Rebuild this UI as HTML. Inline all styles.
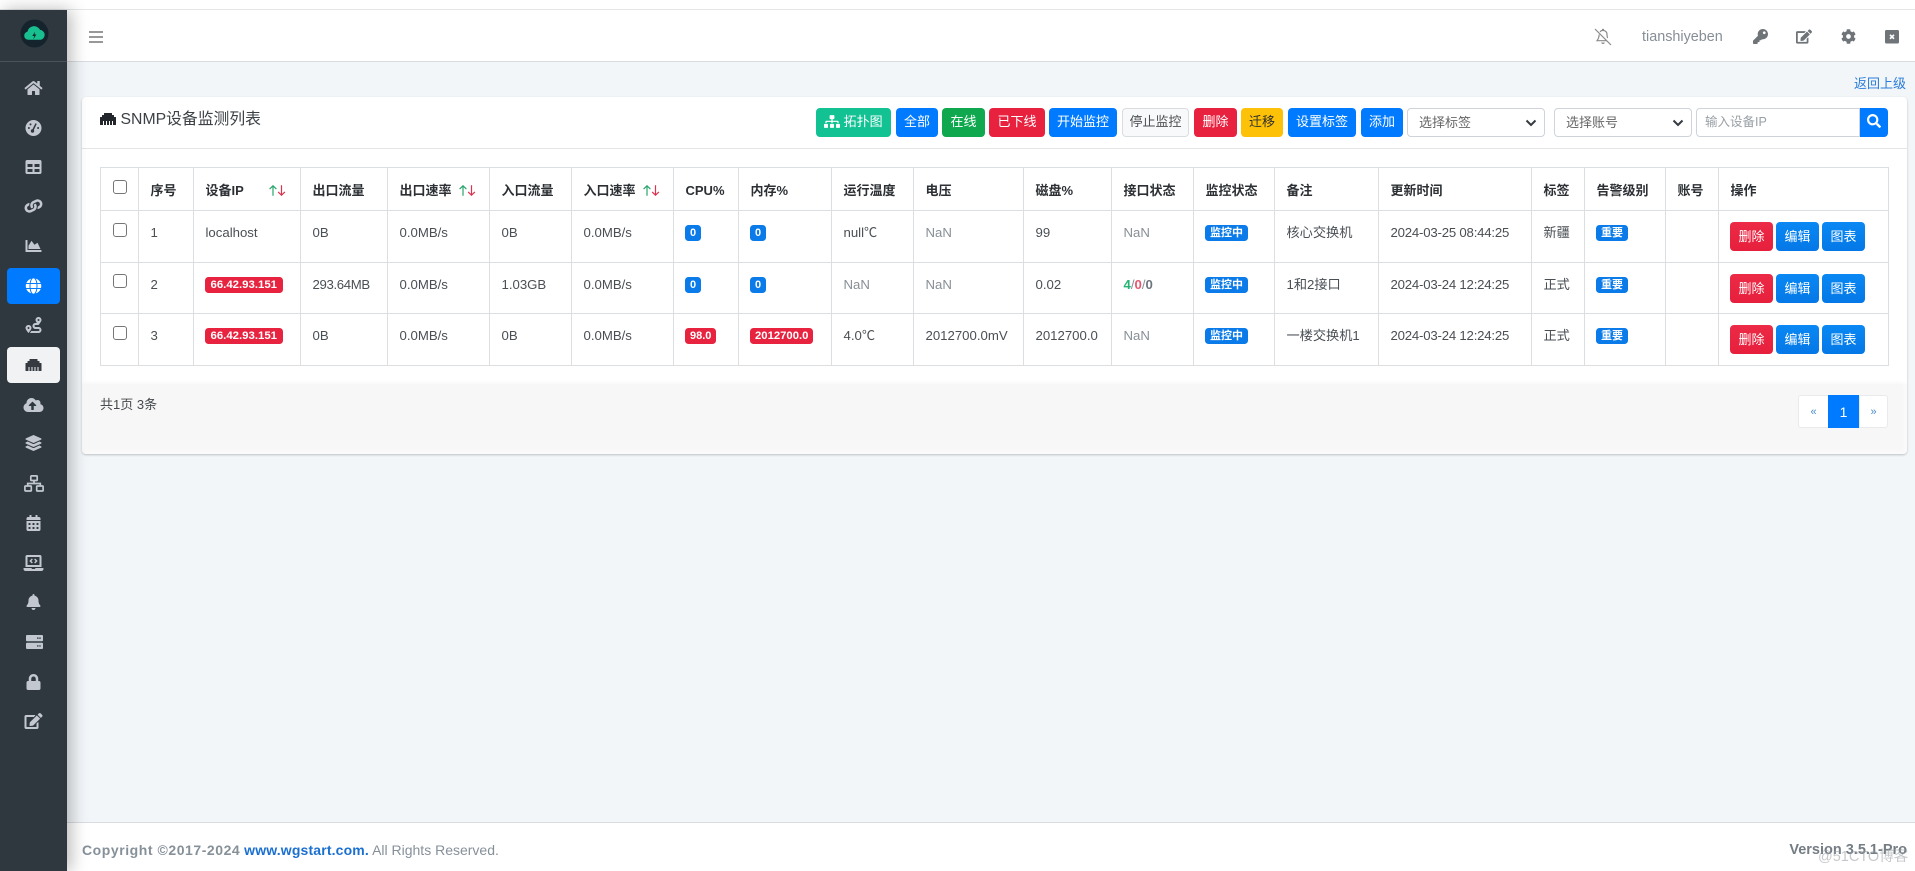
<!DOCTYPE html>
<html lang="zh">
<head>
<meta charset="utf-8">
<title>SNMP设备监测列表</title>
<style>
*{box-sizing:border-box}
html,body{margin:0;padding:0;width:1915px;height:871px;overflow:hidden;background:#f2f6f9;font-family:"Liberation Sans","Noto Sans CJK SC",sans-serif;font-size:13.2px;color:#4a4f54}
.a{position:absolute}
#top{left:0;top:0;width:1915px;height:10px;background:#fff;border-bottom:1px solid #e4e6e8}
#nav{left:67px;top:10px;width:1848px;height:52px;background:#fff;border-bottom:1px solid #d8dde1}
#side{left:0;top:10px;width:67px;height:861px;background:#30383f;box-shadow:4px 0 16px rgba(0,0,0,.28);z-index:5}
#side .ln{position:absolute;left:0;top:51px;width:67px;height:1px;background:#4b5359}
.n{position:absolute;left:0;width:67px;height:16px;fill:#c2c7d0}
.box{position:absolute;left:7px;width:53px;height:36px;border-radius:4px}
#foot{left:67px;top:822px;width:1848px;height:49px;background:#fff;border-top:1px solid #d8dde1}
#card{left:82px;top:97px;width:1825px;height:357px;background:#fff;border-radius:4px;box-shadow:0 1px 2px rgba(0,0,0,.22)}
#chead{left:82px;top:148px;width:1825px;height:1px;background:#e3e5e7}
#cfoot0{left:82px;top:381px;width:1825px;height:73px;background:linear-gradient(#fff,#fafafa 4px);border-radius:0 0 4px 4px}
#cfoot{left:87px;top:384px;width:1815px;height:65px;background:#f7f7f7;box-shadow:0 0 4px 1px #f7f7f7}
.b{position:absolute;top:108px;height:29px;line-height:28px;border-radius:4px;text-align:center;color:#fff;font-size:13px;background:#007bff;white-space:nowrap}
.sel{position:absolute;top:108px;height:29px;background:#fff;border:1px solid #ced4da;border-radius:4px;color:#666;font-size:13px;line-height:27px;padding-left:11px}
.sel svg{position:absolute;top:9px;right:7px;width:12px;height:10px}
table{position:absolute;left:100px;top:167px;width:1788px;border-collapse:collapse;table-layout:fixed;background:#fff}
th,td{border:1px solid #dcdfe2;vertical-align:top;text-align:left;padding:12px 0 0 11.5px;line-height:20px;font-weight:400;white-space:nowrap;overflow:visible}
th{font-weight:700;color:#2c3034;padding-top:13px;font-size:13px}
.cb{display:block;width:14px;height:14px;border:1px solid #767676;border-radius:3px;background:#fff;margin-top:0}
th .cb{margin-top:-1px}
.mut{color:#888f95}
.bd{display:block;width:fit-content;height:16px;line-height:16px;border-radius:3.5px;color:#fff;font-weight:700;font-size:11px;padding:0 5px;margin:2px 0 0 -.5px;background:#0a7be8}
.r{background:#e8233f}
.ip{font-size:11.4px;padding:0 5.500px}
.ops{display:flex;gap:3px;margin:-1px 0 0 -.5px}
.ops span{display:block;width:43px;height:28.5px;line-height:29px;border-radius:4px;color:#fff;font-size:13px;text-align:center;background:linear-gradient(#0a88f4,#0478e6)}
.ops span.del{background:linear-gradient(#ec2b47,#e61f3c)}
.sa{display:inline-block;vertical-align:-1px;width:17px;height:11px}
.tm{letter-spacing:-.2px}
.pg{position:absolute;top:395px;height:33px;background:#fff;text-align:center;line-height:32px;color:#4a8ccc;font-size:11px;border:1px solid #e8eaec}
</style>
</head>
<body>
<svg width="0" height="0" style="position:absolute">
<defs>
<symbol id="home" viewBox="0 0 576 512"><path d="M280.37 148.26L96 300.11V464a16 16 0 0 0 16 16l112.06-.29a16 16 0 0 0 15.92-16V368a16 16 0 0 1 16-16h64a16 16 0 0 1 16 16v95.64a16 16 0 0 0 16 16.05L464 480a16 16 0 0 0 16-16V300L295.67 148.26a12.19 12.19 0 0 0-15.3 0zM571.6 251.47L488 182.56V44.05a12 12 0 0 0-12-12h-56a12 12 0 0 0-12 12v72.61L318.47 43a48 48 0 0 0-61 0L4.34 251.47a12 12 0 0 0-1.6 16.9l25.5 31A12 12 0 0 0 45.15 301l235.22-193.74a12.19 12.19 0 0 1 15.3 0L530.9 301a12 12 0 0 0 16.9-1.6l25.5-31a12 12 0 0 0-1.7-16.93z"/></symbol>
<symbol id="table" viewBox="0 0 512 512"><path d="M464 32H48C21.49 32 0 53.49 0 80v352c0 26.51 21.49 48 48 48h416c26.51 0 48-21.49 48-48V80c0-26.51-21.49-48-48-48zM224 416H64v-96h160v96zm0-160H64v-96h160v96zm224 160H288v-96h160v96zm0-160H288v-96h160v96z"/></symbol>
<symbol id="link" viewBox="0 0 512 512"><path d="M326.612 185.391c59.747 59.809 58.927 155.698.36 214.59-.11.12-.24.25-.36.37l-67.2 67.2c-59.27 59.27-155.699 59.262-214.96 0-59.27-59.26-59.27-155.7 0-214.96l37.106-37.106c9.84-9.84 26.786-3.3 27.294 10.606.648 17.722 3.826 35.527 9.69 52.721 1.986 5.822.567 12.262-3.783 16.612l-13.087 13.087c-28.026 28.026-28.905 73.66-1.155 101.96 28.024 28.579 74.086 28.749 102.325.51l67.2-67.19c28.191-28.191 28.073-73.757 0-101.83-3.701-3.694-7.429-6.564-10.341-8.569a16.037 16.037 0 0 1-6.947-12.606c-.396-10.567 3.348-21.456 11.698-29.806l21.054-21.055c5.521-5.521 14.182-6.199 20.584-1.731a152.482 152.482 0 0 1 20.522 17.197zM467.547 44.449c-59.261-59.262-155.69-59.27-214.96 0l-67.2 67.2c-.12.12-.25.25-.36.37-58.566 58.892-59.387 154.781.36 214.59a152.454 152.454 0 0 0 20.521 17.196c6.402 4.468 15.064 3.789 20.584-1.731l21.054-21.055c8.35-8.35 12.094-19.239 11.698-29.806a16.037 16.037 0 0 0-6.947-12.606c-2.912-2.005-6.64-4.875-10.341-8.569-28.073-28.073-28.191-73.639 0-101.83l67.2-67.19c28.239-28.239 74.3-28.069 102.325.51 27.75 28.3 26.872 73.934-1.155 101.96l-13.087 13.087c-4.35 4.35-5.769 10.79-3.783 16.612 5.864 17.194 9.042 34.999 9.69 52.721.509 13.906 17.454 20.446 27.294 10.606l37.106-37.106c59.271-59.259 59.271-155.699.001-214.959z"/></symbol>
<symbol id="chart" viewBox="0 0 512 512"><path d="M500 384c6.6 0 12 5.4 12 12v40c0 6.6-5.4 12-12 12H12c-6.6 0-12-5.4-12-12V76c0-6.6 5.4-12 12-12h40c6.6 0 12 5.4 12 12v308h436zM372.7 159.5L288 216l-85.3-113.7c-5.1-6.8-15.5-6.3-19.9 1L96 248v104h384l-89.9-187.8c-3.2-6.5-11.4-8.7-17.4-4.7z"/></symbol>
<symbol id="globe" viewBox="0 0 496 512"><path d="M336.5 160C322 70.7 287.8 8 248 8s-74 62.7-88.5 152h177zM152 256c0 22.2 1.2 43.5 3.3 64h185.3c2.1-20.5 3.3-41.8 3.3-64s-1.2-43.5-3.3-64H155.3c-2.1 20.5-3.3 41.8-3.3 64zm324.7-96c-28.6-67.9-86.5-120.4-158-141.6 24.4 33.8 41.2 84.7 50 141.6h108zM177.2 18.4C105.8 39.6 47.8 92.1 19.3 160h108c8.7-56.9 25.5-107.8 49.9-141.6zM487.4 192H372.7c2.1 21 3.3 42.5 3.3 64s-1.2 43-3.3 64h114.6c5.5-20.5 8.6-41.8 8.6-64s-3.1-43.5-8.5-64zM120 256c0-21.5 1.2-43 3.3-64H8.6C3.2 212.5 0 233.8 0 256s3.2 43.5 8.6 64h114.6c-2-21-3.2-42.5-3.2-64zm39.5 96c14.5 89.3 48.7 152 88.5 152s74-62.7 88.5-152h-177zm159.3 141.6c71.4-21.2 129.4-73.7 158-141.6h-108c-8.8 56.9-25.6 107.8-50 141.6zM19.3 352c28.6 67.9 86.5 120.4 158 141.6-24.4-33.8-41.2-84.7-50-141.6h-108z"/></symbol>
<symbol id="route" viewBox="0 0 512 512"><path d="M416 320h-96c-17.6 0-32-14.4-32-32s14.4-32 32-32h96s96-107 96-160-43-96-96-96-96 43-96 96c0 25.5 22.2 63.4 45.3 96H320c-52.9 0-96 43.1-96 96s43.1 96 96 96h96c17.6 0 32 14.4 32 32s-14.4 32-32 32H185.5c-16 24.8-33.8 47.7-47.3 64H416c52.9 0 96-43.1 96-96s-43.1-96-96-96zm0-256c17.7 0 32 14.3 32 32s-14.3 32-32 32-32-14.3-32-32 14.3-32 32-32zM96 256c-53 0-96 43-96 96s96 160 96 160 96-107 96-160-43-96-96-96zm0 128c-17.7 0-32-14.3-32-32s14.3-32 32-32 32 14.3 32 32-14.3 32-32 32z"/></symbol>
<symbol id="eth" viewBox="0 0 512 512"><path d="M496 192h-48v-48c0-8.8-7.2-16-16-16h-48V80c0-8.8-7.2-16-16-16H144c-8.8 0-16 7.2-16 16v48H80c-8.8 0-16 7.2-16 16v48H16c-8.8 0-16 7.2-16 16v224c0 8.8 7.2 16 16 16h80V320h32v128h64V320h32v128h64V320h32v128h64V320h32v128h80c8.8 0 16-7.2 16-16V208c0-8.8-7.2-16-16-16z"/></symbol>
<symbol id="cloud" viewBox="0 0 640 512"><path d="M537.6 226.6c4.1-10.7 6.4-22.4 6.4-34.6 0-53-43-96-96-96-19.7 0-38.1 6-53.3 16.2C367 64.2 315.3 32 256 32c-88.4 0-160 71.6-160 160 0 2.7.1 5.4.2 8.1C40.2 219.8 0 273.2 0 336c0 79.5 64.5 144 144 144h368c70.7 0 128-57.3 128-128 0-61.9-44-113.6-102.4-125.4zM393.4 288H328v112c0 8.8-7.2 16-16 16h-48c-8.8 0-16-7.2-16-16V288h-65.4c-14.3 0-21.4-17.2-11.3-27.3l105.4-105.4c6.2-6.2 16.4-6.2 22.6 0l105.4 105.4c10.1 10.1 2.9 27.3-11.3 27.3z"/></symbol>
<symbol id="layers" viewBox="0 0 512 512"><path d="M12.41 148.02l232.94 105.67c6.8 3.09 14.49 3.09 21.29 0l232.94-105.67c16.55-7.51 16.55-32.52 0-40.03L266.65 2.31a25.607 25.607 0 0 0-21.29 0L12.41 107.98c-16.55 7.51-16.55 32.53 0 40.04zm487.18 88.28l-58.09-26.33-161.64 73.27c-7.56 3.43-15.59 5.17-23.86 5.17s-16.29-1.74-23.86-5.17L70.51 209.97l-58.1 26.33c-16.55 7.5-16.55 32.5 0 40l232.94 105.59c6.8 3.08 14.49 3.08 21.29 0L499.59 276.3c16.55-7.5 16.55-32.5 0-40zm0 127.8l-57.87-26.23-161.86 73.37c-7.56 3.43-15.59 5.17-23.86 5.17s-16.29-1.74-23.86-5.17L70.29 337.87 12.41 364.1c-16.55 7.5-16.55 32.5 0 40l232.94 105.59c6.8 3.08 14.49 3.08 21.29 0L499.59 404.1c16.55-7.5 16.55-32.5 0-40z"/></symbol>
<symbol id="sitemap" viewBox="0 0 640 512"><path d="M128 352H32c-17.67 0-32 14.33-32 32v96c0 17.67 14.33 32 32 32h96c17.67 0 32-14.33 32-32v-96c0-17.67-14.33-32-32-32zm-24-80h192v48h48v-48h192v48h48v-57.59c0-21.17-17.23-38.41-38.41-38.41H344v-64h40c17.67 0 32-14.33 32-32V32c0-17.67-14.33-32-32-32H256c-17.67 0-32 14.33-32 32v96c0 17.67 14.33 32 32 32h40v64H94.41C73.23 224 56 241.23 56 262.41V320h48v-48zm264 80h-96c-17.67 0-32 14.33-32 32v96c0 17.67 14.33 32 32 32h96c17.67 0 32-14.33 32-32v-96c0-17.67-14.33-32-32-32zm240 0h-96c-17.67 0-32 14.33-32 32v96c0 17.67 14.33 32 32 32h96c17.67 0 32-14.33 32-32v-96c0-17.67-14.33-32-32-32z"/></symbol>
<symbol id="cal" viewBox="0 0 448 512"><path d="M0 464c0 26.5 21.5 48 48 48h352c26.5 0 48-21.5 48-48V192H0v272zm320-196c0-6.6 5.4-12 12-12h40c6.6 0 12 5.4 12 12v40c0 6.6-5.4 12-12 12h-40c-6.6 0-12-5.4-12-12v-40zm0 128c0-6.6 5.4-12 12-12h40c6.6 0 12 5.4 12 12v40c0 6.6-5.4 12-12 12h-40c-6.6 0-12-5.4-12-12v-40zM192 268c0-6.6 5.4-12 12-12h40c6.6 0 12 5.4 12 12v40c0 6.6-5.4 12-12 12h-40c-6.6 0-12-5.4-12-12v-40zm0 128c0-6.6 5.4-12 12-12h40c6.6 0 12 5.4 12 12v40c0 6.6-5.4 12-12 12h-40c-6.6 0-12-5.4-12-12v-40zM64 268c0-6.6 5.4-12 12-12h40c6.6 0 12 5.4 12 12v40c0 6.6-5.4 12-12 12H76c-6.6 0-12-5.4-12-12v-40zm0 128c0-6.6 5.4-12 12-12h40c6.6 0 12 5.4 12 12v40c0 6.6-5.4 12-12 12H76c-6.6 0-12-5.4-12-12v-40zM400 64h-48V16c0-8.8-7.2-16-16-16h-32c-8.8 0-16 7.2-16 16v48H160V16c0-8.8-7.2-16-16-16h-32c-8.8 0-16 7.2-16 16v48H48C21.5 64 0 85.5 0 112v48h448v-48c0-26.5-21.5-48-48-48z"/></symbol>
<symbol id="laptop" viewBox="0 0 640 512"><path d="M255.03 261.65c6.25 6.25 16.38 6.25 22.63 0l11.31-11.31c6.25-6.25 6.25-16.38 0-22.63L253.25 192l35.71-35.72c6.25-6.25 6.25-16.38 0-22.63l-11.31-11.31c-6.25-6.25-16.38-6.25-22.63 0l-58.34 58.34c-6.25 6.25-6.25 16.38 0 22.63l58.35 58.34zm96.01-11.3l11.31 11.31c6.25 6.25 16.38 6.25 22.63 0l58.34-58.34c6.25-6.25 6.25-16.38 0-22.63l-58.34-58.34c-6.25-6.25-16.38-6.25-22.63 0l-11.31 11.31c-6.25 6.25-6.25 16.38 0 22.63L386.75 192l-35.71 35.72c-6.25 6.25-6.25 16.38 0 22.63zM624 416H381.54c-.74 19.81-14.71 32-32.74 32H288c-18.69 0-33.02-17.47-32.77-32H16c-8.8 0-16 7.2-16 16v16c0 35.2 28.8 64 64 64h512c35.2 0 64-28.8 64-64v-16c0-8.8-7.2-16-16-16zM576 48c0-26.4-21.6-48-48-48H112C85.6 0 64 21.6 64 48v336h512V48zm-64 272H128V64h384v256z"/></symbol>
<symbol id="bell" viewBox="0 0 448 512"><path d="M224 512c35.32 0 63.97-28.65 63.97-64H160.03c0 35.35 28.65 64 63.97 64zm215.39-149.71c-19.32-20.76-55.47-51.99-55.47-154.29 0-77.7-54.48-139.9-127.94-155.16V32c0-17.67-14.32-32-31.98-32s-31.98 14.33-31.98 32v20.84C118.56 68.1 64.08 130.3 64.08 208c0 102.3-36.15 133.53-55.47 154.29-6 6.45-8.66 14.16-8.61 21.71.11 16.4 12.98 32 32.1 32h383.8c19.12 0 32-15.6 32.1-32 .05-7.55-2.61-15.27-8.61-21.71z"/></symbol>
<symbol id="lock" viewBox="0 0 448 512"><path d="M400 224h-24v-72C376 68.2 307.8 0 224 0S72 68.2 72 152v72H48c-26.5 0-48 21.5-48 48v192c0 26.5 21.5 48 48 48h352c26.5 0 48-21.5 48-48V272c0-26.5-21.5-48-48-48zm-104 0H152v-72c0-39.7 32.3-72 72-72s72 32.3 72 72v72z"/></symbol>
<symbol id="edit" viewBox="0 0 576 512"><path d="M402.6 83.2l90.2 90.2c3.8 3.8 3.8 10 0 13.8L274.4 405.6l-92.8 10.3c-12.4 1.4-22.9-9.1-21.5-21.5l10.3-92.8L388.8 83.2c3.8-3.8 10-3.8 13.8 0zm162-22.9l-48.8-48.8c-15.2-15.2-39.9-15.2-55.2 0l-35.4 35.4c-3.8 3.8-3.8 10 0 13.8l90.2 90.2c3.8 3.8 10 3.8 13.8 0l35.4-35.4c15.2-15.3 15.2-40 0-55.2zM384 346.2V448H64V128h229.8c3.2 0 6.2-1.3 8.5-3.5l40-40c7.6-7.6 2.2-20.5-8.5-20.5H48C21.5 64 0 85.5 0 112v352c0 26.5 21.5 48 48 48h352c26.5 0 48-21.5 48-48V306.2c0-10.7-12.9-16-20.5-8.5l-40 40c-2.2 2.3-3.5 5.3-3.5 8.5z"/></symbol>
<symbol id="key" viewBox="0 0 512 512"><path d="M512 176.001C512 273.203 433.202 352 336 352c-11.22 0-22.19-1.062-32.827-3.069l-24.012 27.014A23.999 23.999 0 0 1 261.223 384H224v40c0 13.255-10.745 24-24 24h-40v40c0 13.255-10.745 24-24 24H24c-13.255 0-24-10.745-24-24v-78.059c0-6.365 2.529-12.47 7.029-16.971l161.802-161.802C163.108 213.814 160 195.271 160 176 160 78.798 238.797.001 335.999 0 433.488-.001 512 78.511 512 176.001zM336 128c0 26.51 21.49 48 48 48s48-21.49 48-48-21.49-48-48-48-48 21.49-48 48z"/></symbol>
<symbol id="cog" viewBox="0 0 512 512"><path d="M487.4 315.7l-42.6-24.6c4.3-23.2 4.3-47 0-70.2l42.6-24.6c4.9-2.8 7.1-8.6 5.5-14-11.1-35.6-30-67.8-54.7-94.6-3.8-4.1-10-5.1-14.8-2.3L380.8 110c-17.9-15.4-38.5-27.3-60.8-35.1V25.8c0-5.6-3.9-10.5-9.4-11.7-36.7-8.2-74.3-7.8-109.2 0-5.5 1.2-9.4 6.1-9.4 11.7V75c-22.2 7.9-42.8 19.8-60.8 35.1L88.7 85.5c-4.9-2.8-11-1.9-14.8 2.3-24.7 26.7-43.6 58.9-54.7 94.6-1.7 5.4.6 11.2 5.5 14L67.3 221c-4.3 23.2-4.3 47 0 70.2l-42.6 24.6c-4.9 2.8-7.1 8.6-5.5 14 11.1 35.6 30 67.8 54.7 94.6 3.8 4.1 10 5.1 14.8 2.3l42.6-24.6c17.9 15.4 38.5 27.3 60.8 35.1v49.2c0 5.6 3.9 10.5 9.4 11.7 36.7 8.2 74.3 7.8 109.2 0 5.5-1.2 9.4-6.1 9.4-11.7v-49.2c22.2-7.9 42.8-19.8 60.8-35.1l42.6 24.6c4.9 2.8 11 1.9 14.8-2.3 24.7-26.7 43.6-58.9 54.7-94.6 1.5-5.5-.7-11.3-5.6-14.1zM256 336c-44.1 0-80-35.9-80-80s35.9-80 80-80 80 35.9 80 80-35.9 80-80 80z"/></symbol>
<symbol id="search" viewBox="0 0 512 512"><path d="M505 442.7L405.3 343c-4.5-4.5-10.6-7-17-7H372c27.6-35.3 44-79.7 44-128C416 93.1 322.9 0 208 0S0 93.1 0 208s93.1 208 208 208c48.3 0 92.7-16.4 128-44v16.3c0 6.4 2.5 12.5 7 17l99.7 99.7c9.4 9.4 24.6 9.4 33.9 0l28.3-28.3c9.4-9.4 9.4-24.6.1-34zM208 336c-70.7 0-128-57.2-128-128 0-70.7 57.2-128 128-128 70.7 0 128 57.2 128 128 0 70.7-57.2 128-128 128z"/></symbol>
<symbol id="sort" viewBox="0 0 17 11"><path d="M4 10.700V.8M.6 4.100L4 .8l3.400 3.300" fill="none" stroke="#2aa56c" stroke-width="1.2"/><path d="M12.500 .3v9.900M9.100 6.900l3.400 3.300 3.400-3.300" fill="none" stroke="#d9344f" stroke-width="1.2"/></symbol>
<symbol id="chev" viewBox="0 0 12 10"><path d="M1.500 2.500L6 7l4.500-4.500" fill="none" stroke="#343a40" stroke-width="2"/></symbol>
</defs>
</svg>

<div class="a" id="top"></div>
<div class="a" id="nav"></div>

<div class="a" id="card"></div>
<div class="a" id="chead"></div>
<div class="a" id="cfoot0"></div>
<div class="a" id="cfoot"></div>

<div class="a" id="side">
  <div class="ln"></div>
  <div class="box" style="top:258px;background:#007bff"></div>
  <div class="box" style="top:337px;background:#f1f2f3"></div>
  <svg class="a" style="left:19.500px;top:8.500px;width:29px;height:29px" viewBox="0 0 30 30">
    <circle cx="15" cy="15" r="14.500" fill="#15232c"/>
    <path d="M8.600 21.500a4.300 4.300 0 0 1-.9-8.500 6.900 6.900 0 0 1 13-1.700 5.200 5.200 0 0 1 1 10.200z" fill="#18c08f"/>
    <path d="M15.700 13l-3 4.600h2l-.9 3.400 3.200-5h-2z" fill="#12262c"/>
  </svg>
  <svg class="n" style="top:70px"><use href="#home"/></svg>
  <svg class="n" style="top:110px" viewBox="0 0 16 16"><circle cx="8" cy="8" r="8"/><path d="M7.200 10.500L10.600 3.600" stroke="#30383f" stroke-width="1.500"/><circle cx="7" cy="11" r="1.700" fill="#30383f"/><circle cx="3.400" cy="8" r="1" fill="#30383f"/><circle cx="5" cy="4.400" r="1" fill="#30383f"/><circle cx="12.600" cy="8" r="1" fill="#30383f"/></svg>
  <svg class="n" style="top:149px"><use href="#table"/></svg>
  <svg class="n" style="top:188px"><use href="#link" transform="rotate(20 33.500 8)"/></svg>
  <svg class="n" style="top:228px"><use href="#chart"/></svg>
  <svg class="n" style="top:268px;fill:#fff"><use href="#globe"/></svg>
  <svg class="n" style="top:307px"><use href="#route"/></svg>
  <svg class="n" style="top:347px;fill:#343a40"><use href="#eth"/></svg>
  <svg class="n" style="top:387px"><use href="#cloud"/></svg>
  <svg class="n" style="top:425px"><use href="#layers"/></svg>
  <svg class="a" style="left:24px;top:465px;width:20px;height:17px" viewBox="0 0 20 17" fill="none" stroke="#c2c7d0" stroke-width="1.700"><rect x="6.800" y=".9" width="6.400" height="4.600" rx=".8"/><path d="M10 5.500v3M3.700 11V8.500h12.600V11"/><rect x=".9" y="11" width="6.400" height="5" rx=".8"/><rect x="12.700" y="11" width="6.400" height="5" rx=".8"/></svg>
  <svg class="n" style="top:505px"><use href="#cal"/></svg>
  <svg class="n" style="top:545px"><use href="#laptop"/></svg>
  <svg class="n" style="top:584px"><use href="#bell"/></svg>
  <svg class="a" style="left:25.500px;top:625px;width:17px;height:14px" viewBox="0 0 17 14"><rect y="0" width="17" height="6.200" rx="1" fill="#c2c7d0"/><rect y="7.800" width="17" height="6.200" rx="1" fill="#c2c7d0"/><circle cx="14" cy="3.100" r=".8" fill="#30383f"/><circle cx="11.800" cy="3.100" r=".8" fill="#30383f"/><circle cx="14" cy="10.900" r=".8" fill="#30383f"/><circle cx="11.800" cy="10.900" r=".8" fill="#30383f"/></svg>
  <svg class="n" style="top:664px"><use href="#lock"/></svg>
  <svg class="n" style="top:703px"><use href="#edit"/></svg>
</div>

<!-- navbar -->
<svg class="a" style="left:89px;top:30.500px;width:14px;height:12px" viewBox="0 0 14 12"><path d="M0 1h14M0 6h14M0 11h14" stroke="#777" stroke-width="1.500"/></svg>
<svg class="a" style="left:1594px;top:28px;width:18px;height:18px" viewBox="0 0 18 18" fill="none" stroke="#8a8a8a" stroke-width="1.200"><path d="M1 1l16 16"/><path d="M5.200 6.500C5 9.500 4.400 11 3 12.700h10M6 3.800a4 4 0 0 1 7 2.700c0 1.500.2 2.600.6 3.500"/><path d="M8 1.500h2M7.700 14.500a1.400 1.400 0 0 0 2.600 0"/></svg>
<div class="a" style="left:1642px;top:27px;line-height:20px;font-size:14.400px;color:#868e96">tianshiyeben</div>
<svg class="a" style="left:1752.500px;top:29px;width:15px;height:15px;fill:#6f7479"><use href="#key"/></svg>
<svg class="a" style="left:1796px;top:29px;width:16px;height:15px;fill:#6f7479"><use href="#edit"/></svg>
<svg class="a" style="left:1840.500px;top:29px;width:15px;height:15px;fill:#6f7479"><use href="#cog"/></svg>
<svg class="a" style="left:1885px;top:30px;width:14px;height:14px" viewBox="0 0 14 14"><rect width="14" height="13.500" rx="1.500" fill="#6f7479"/><path d="M5 4.800l4 4M9 4.800l-4 4" stroke="#fff" stroke-width="1.700"/></svg>

<div class="a" style="left:1854px;top:74px;line-height:20px;font-size:13px;color:#2a7cd8">返回上级</div>

<!-- card header -->
<svg class="a" style="left:100px;top:111px;width:16px;height:16px;fill:#23272b"><use href="#eth"/></svg>
<div class="a" style="left:120.500px;top:108px;line-height:24px;font-size:15.800px;color:#3c4146">SNMP设备监测列表</div>

<div class="b" style="left:816px;width:75px;background:#12c293;text-align:left;padding-left:8px"><svg style="width:16px;height:13px;fill:#fff;vertical-align:-2px"><use href="#sitemap"/></svg> 拓扑图</div>
<div class="b" style="left:896px;width:42px">全部</div>
<div class="b" style="left:942px;width:43px;background:#0fa84f">在线</div>
<div class="b" style="left:989px;width:56px;background:#e8213f">已下线</div>
<div class="b" style="left:1049px;width:68px">开始监控</div>
<div class="b" style="left:1122px;width:67px;background:#f8f9fa;border:1px solid #dadde0;color:#4b4f53;line-height:26px">停止监控</div>
<div class="b" style="left:1194px;width:43px;background:#e8213f">删除</div>
<div class="b" style="left:1241px;width:42px;background:#fdc107;color:#2f2f2f">迁移</div>
<div class="b" style="left:1288px;width:68px">设置标签</div>
<div class="b" style="left:1361px;width:42px">添加</div>
<div class="sel" style="left:1407px;width:138px">选择标签<svg><use href="#chev"/></svg></div>
<div class="sel" style="left:1554px;width:138px">选择账号<svg><use href="#chev"/></svg></div>
<div class="sel" style="left:1696px;width:164px;border-radius:4px 0 0 4px;color:#9aa0a6;padding-left:8px;font-size:12.500px">输入设备IP</div>
<div class="b" style="left:1859.500px;width:28.500px;border-radius:0 4px 4px 0"><svg style="width:14px;height:14px;fill:#fff;vertical-align:-2px"><use href="#search"/></svg></div>

<table>
<colgroup>
<col style="width:38px"><col style="width:55px"><col style="width:107px"><col style="width:87px"><col style="width:102px"><col style="width:82px"><col style="width:102px"><col style="width:65px"><col style="width:93px"><col style="width:82px"><col style="width:110px"><col style="width:88px"><col style="width:82px"><col style="width:81px"><col style="width:104px"><col style="width:153px"><col style="width:53px"><col style="width:81px"><col style="width:53px"><col style="width:170px">
</colgroup>
<tr style="height:43px">
<th><span class="cb"></span></th><th>序号</th><th>设备IP<svg class="sa" style="margin-left:25px"><use href="#sort"/></svg></th><th>出口流量</th><th>出口速率<svg class="sa" style="margin-left:7px"><use href="#sort"/></svg></th><th>入口流量</th><th>入口速率<svg class="sa" style="margin-left:7px"><use href="#sort"/></svg></th><th>CPU%</th><th>内存%</th><th>运行温度</th><th>电压</th><th>磁盘%</th><th>接口状态</th><th>监控状态</th><th>备注</th><th>更新时间</th><th>标签</th><th>告警级别</th><th>账号</th><th>操作</th>
</tr>
<tr style="height:52px">
<td><span class="cb"></span></td><td>1</td><td>localhost</td><td>0B</td><td>0.0MB/s</td><td>0B</td><td>0.0MB/s</td><td><span class="bd">0</span></td><td><span class="bd">0</span></td><td>null℃</td><td class="mut">NaN</td><td>99</td><td class="mut">NaN</td><td><span class="bd">监控中</span></td><td>核心交换机</td><td class="tm">2024-03-25 08:44:25</td><td>新疆</td><td><span class="bd">重要</span></td><td></td><td><div class="ops"><span class="del">删除</span><span>编辑</span><span>图表</span></div></td>
</tr>
<tr style="height:51px">
<td><span class="cb" style="margin-top:-1px"></span></td><td>2</td><td><span class="bd r ip">66.42.93.151</span></td><td style="letter-spacing:-.35px">293.64MB</td><td>0.0MB/s</td><td>1.03GB</td><td>0.0MB/s</td><td><span class="bd">0</span></td><td><span class="bd">0</span></td><td class="mut">NaN</td><td class="mut">NaN</td><td>0.02</td><td><b style="color:#22b573">4</b><span class="mut">/</span><b style="color:#e2596e">0</b><span class="mut">/</span><b style="color:#6c757d">0</b></td><td><span class="bd">监控中</span></td><td>1和2接口</td><td class="tm">2024-03-24 12:24:25</td><td>正式</td><td><span class="bd">重要</span></td><td></td><td><div class="ops"><span class="del">删除</span><span>编辑</span><span>图表</span></div></td>
</tr>
<tr style="height:52px">
<td><span class="cb"></span></td><td>3</td><td><span class="bd r ip">66.42.93.151</span></td><td>0B</td><td>0.0MB/s</td><td>0B</td><td>0.0MB/s</td><td><span class="bd r">98.0</span></td><td><span class="bd r" style="font-size:11.300px">2012700.0</span></td><td>4.0℃</td><td>2012700.0mV</td><td>2012700.0</td><td class="mut">NaN</td><td><span class="bd">监控中</span></td><td>一楼交换机1</td><td class="tm">2024-03-24 12:24:25</td><td>正式</td><td><span class="bd">重要</span></td><td></td><td><div class="ops"><span class="del">删除</span><span>编辑</span><span>图表</span></div></td>
</tr>
</table>

<div class="a" style="left:100px;top:395px;line-height:20px;font-size:13px;color:#45494d">共1页 3条</div>
<div class="pg" style="left:1798px;width:31px;border-radius:3px 0 0 3px">«</div>
<div class="pg" style="left:1828px;width:31px;background:#007bff;border-color:#007bff;color:#fff;font-size:14px">1</div>
<div class="pg" style="left:1859px;width:29px;border-radius:0 3px 3px 0">»</div>

<div class="a" id="foot"></div>
<div class="a" style="left:82px;top:840px;line-height:20px;font-size:14px;color:#869099;white-space:nowrap"><b style="letter-spacing:.55px">Copyright ©2017-2024</b> <b style="color:#1a6fd0;letter-spacing:.15px">www.wgstart.com.</b> All Rights Reserved.</div>
<div class="a" style="right:8px;top:840px;line-height:20px;font-size:14.500px;font-weight:700;color:#747c84;white-space:nowrap">Version 3.5.1-Pro</div>
<div class="a" style="left:1818px;top:847px;line-height:20px;font-size:14.500px;color:rgba(150,155,160,.55);white-space:nowrap">@51CTO博客</div>
</body>
</html>
